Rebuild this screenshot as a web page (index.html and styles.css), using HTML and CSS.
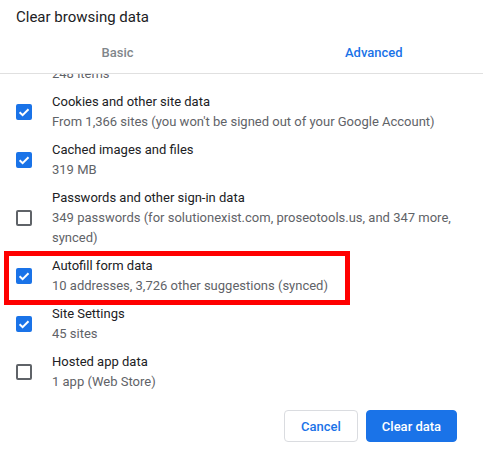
FILE: index.html
```html
<!DOCTYPE html>
<html>
<head>
<meta charset="utf-8">
<title>Clear browsing data</title>
<link rel="stylesheet" href="styles.css">
</head>
<body>
<div class="dialog">
  <div class="title">Clear browsing data</div>
  <div class="tabs">
    <div class="tab tab-basic">Basic</div>
    <div class="tab tab-adv">Advanced</div>
  </div>
  <div class="scroller">
    <div class="list">
      <div class="row row-partial">
        <div class="text"><div class="sub">248 items</div></div>
      </div>
      <div class="row">
        <span class="box checked"><svg viewBox="0 0 16 16"><path d="M3.6 8.2 L6.6 11.1 L12.5 5.2"/></svg></span>
        <div class="text"><div class="label">Cookies and other site data</div><div class="sub">From 1,366 sites (you won't be signed out of your Google Account)</div></div>
      </div>
      <div class="row">
        <span class="box checked"><svg viewBox="0 0 16 16"><path d="M3.6 8.2 L6.6 11.1 L12.5 5.2"/></svg></span>
        <div class="text"><div class="label">Cached images and files</div><div class="sub">319 MB</div></div>
      </div>
      <div class="row">
        <span class="box"></span>
        <div class="text"><div class="label">Passwords and other sign-in data</div><div class="sub">349 passwords (for solutionexist.com, proseotools.us, and 347 more, synced)</div></div>
      </div>
      <div class="row row-marked">
        <span class="box checked"><svg viewBox="0 0 16 16"><path d="M3.6 8.2 L6.6 11.1 L12.5 5.2"/></svg></span>
        <div class="text"><div class="label">Autofill form data</div><div class="sub">10 addresses, 3,726 other suggestions (synced)</div></div>
        <div class="highlight"></div>
      </div>
      <div class="row">
        <span class="box checked"><svg viewBox="0 0 16 16"><path d="M3.6 8.2 L6.6 11.1 L12.5 5.2"/></svg></span>
        <div class="text"><div class="label">Site Settings</div><div class="sub">45 sites</div></div>
      </div>
      <div class="row">
        <span class="box"></span>
        <div class="text"><div class="label">Hosted app data</div><div class="sub">1 app (Web Store)</div></div>
      </div>
    </div>
  </div>
  <div class="actions">
    <button class="btn btn-cancel">Cancel</button>
    <button class="btn btn-primary">Clear data</button>
  </div>
</div>
</body>
</html>
```
FILE: styles.css
```css
html, body {
  margin: 0;
  padding: 0;
  background: #ffffff;
}
body {
  width: 483px;
  height: 449px;
  overflow: hidden;
  font-family: Roboto, "Liberation Sans", Arial, sans-serif;
  color: #202124;
  font-size: 13px;
  line-height: 20px;
}
.dialog {
  width: 483px;
}
.title {
  padding: 7px 0 6px 16px;
  font-size: 15px;
  line-height: 20px;
  color: #202124;
}
.tabs {
  display: grid;
  grid-template-columns: 235px 1fr;
  padding: 10px 0 10px;
  border-bottom: 1px solid #e0e0e0;
}
.tab {
  font-weight: 500;
  font-size: 13px;
  line-height: 20px;
  white-space: nowrap;
}
.tab-basic {
  color: #80868b;
  text-align: center;
}
.tab-adv {
  color: #1a73e8;
  padding-left: 110px;
}
.scroller {
  height: 320px;
  overflow: hidden;
}
.row {
  position: relative;
  display: flex;
  align-items: center;
  padding: 4px 0;
}
.row-partial {
  margin-top: -10px;
  padding: 0 0 4px 52px;
}
.box {
  flex: none;
  width: 16px;
  height: 16px;
  margin-left: 16px;
  margin-right: 20px;
  box-sizing: border-box;
  border: 2px solid #5f6368;
  border-radius: 2px;
  display: flex;
}
.box.checked {
  background: #1a73e8;
  border-color: #1a73e8;
}
.box svg {
  width: 16px;
  height: 16px;
  margin: -2px;
  fill: none;
  stroke: #ffffff;
  stroke-width: 2;
}
.text {
  flex: 1;
  padding-right: 20px;
}
.label {
  color: #202124;
}
.sub {
  color: #5f6368;
}
.highlight {
  position: absolute;
  left: 4px;
  top: -1px;
  width: 346px;
  height: 54px;
  box-sizing: border-box;
  border: 5px solid #ff0000;
}
.actions {
  display: flex;
  justify-content: flex-end;
  gap: 8px;
  padding: 16px 26px 0 0;
}
.btn {
  height: 32px;
  box-sizing: border-box;
  border-radius: 4px;
  font-family: Roboto, "Liberation Sans", Arial, sans-serif;
  font-size: 13px;
  font-weight: 500;
  padding: 0;
  cursor: pointer;
}
.btn-cancel {
  width: 74px;
  background: #ffffff;
  color: #1a73e8;
  border: 1px solid #dadce0;
}
.btn-primary {
  width: 91px;
  background: #1a73e8;
  color: #ffffff;
  border: 1px solid #1a73e8;
}
```
